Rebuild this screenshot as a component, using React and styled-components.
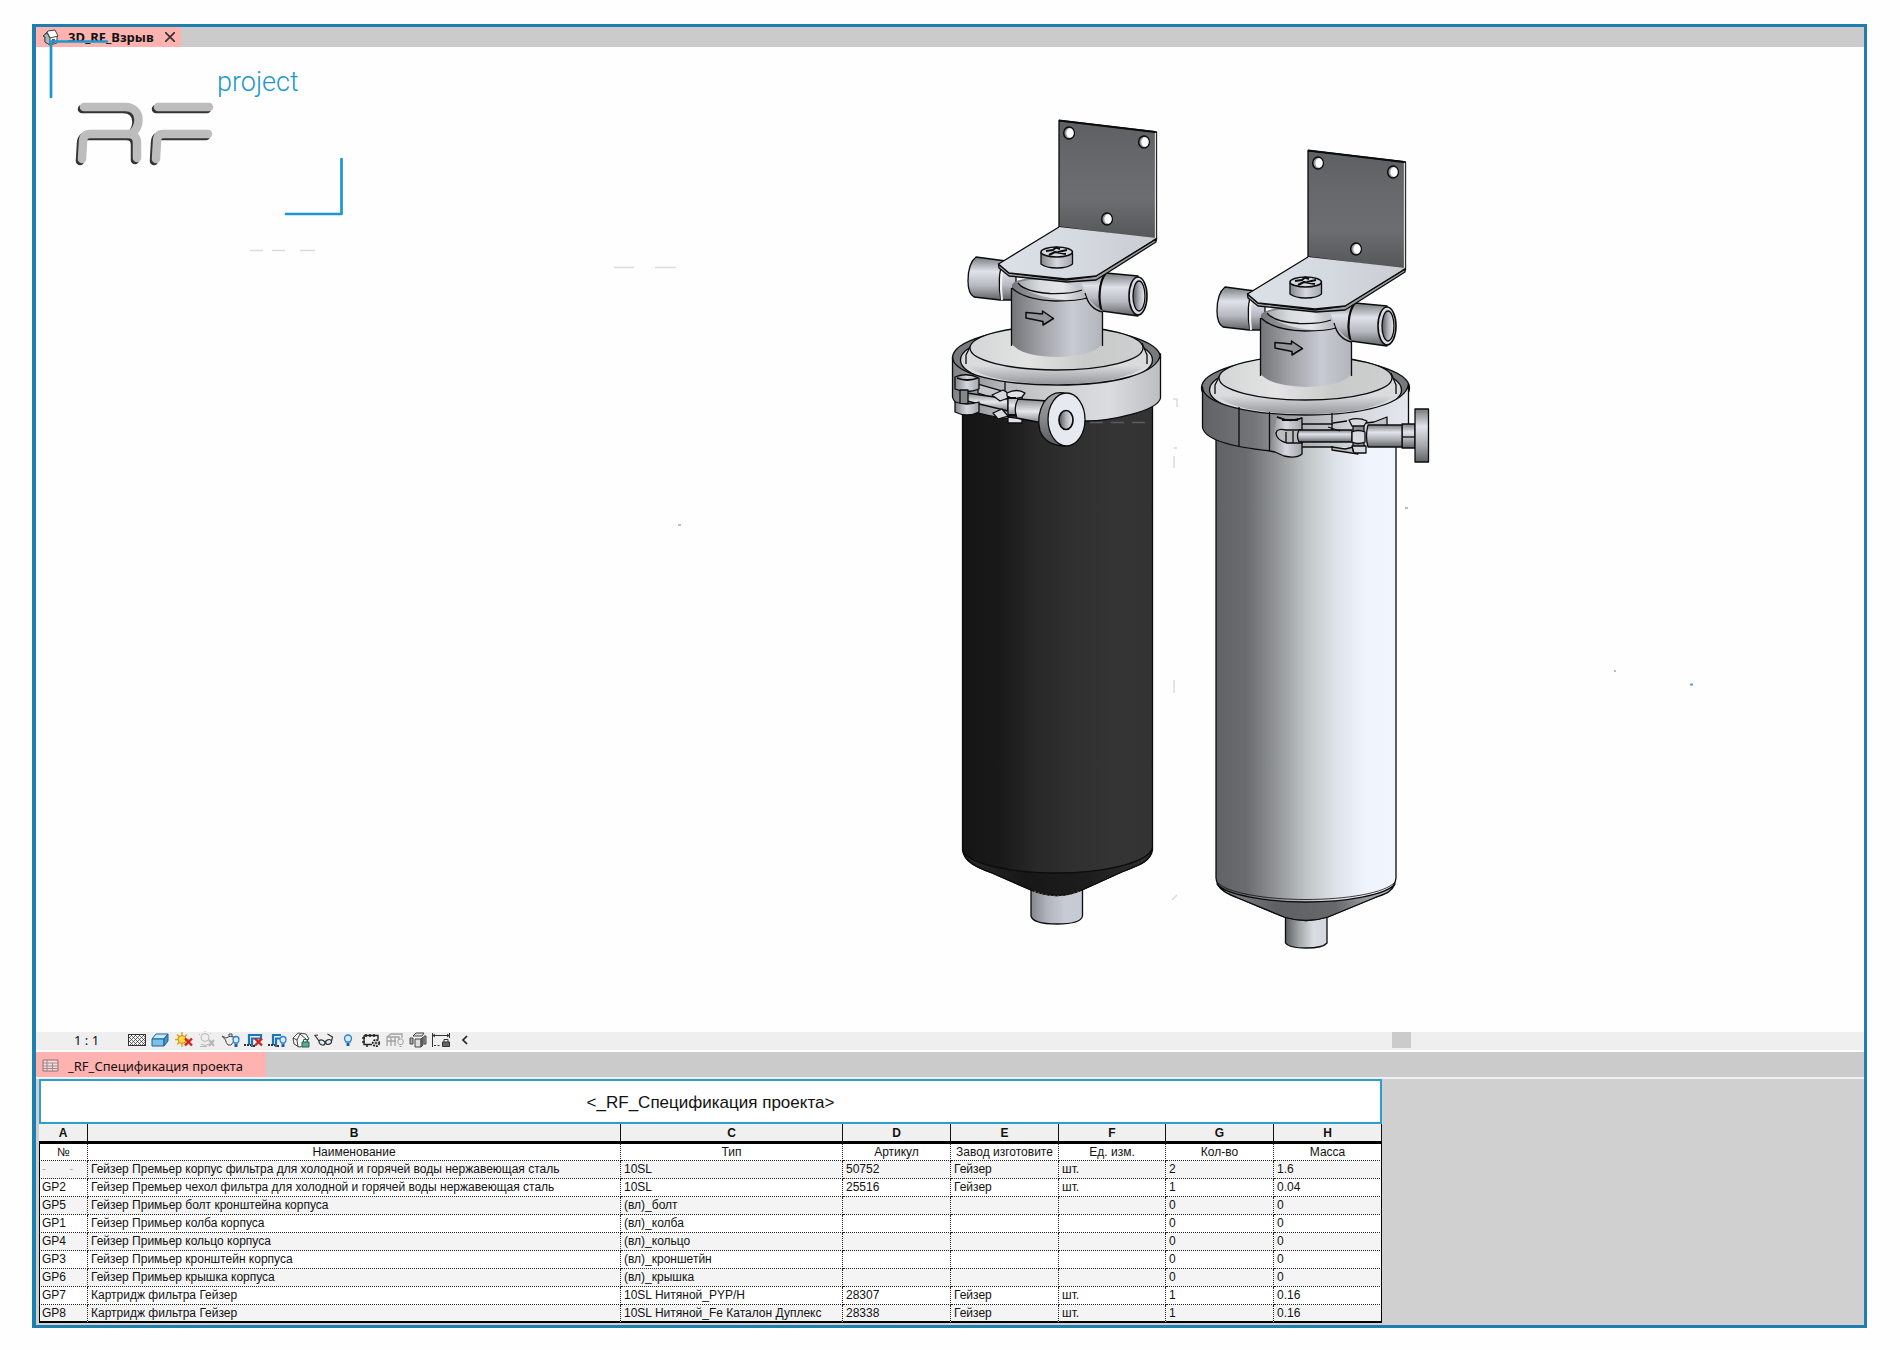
import React from "react";
import styled, { createGlobalStyle } from "styled-components";

const GlobalStyle = createGlobalStyle`
  * {
    box-sizing: border-box;
  }
  body {
    margin: 0;
    background: #fefefe;
    color: #111;
    font-family: "Noto Sans", "Open Sans", sans-serif;
  }
  button {
    padding: 0;
    border: 0;
    background: none;
    color: inherit;
    font: inherit;
  }
`;

const Page = styled.div`
  padding: 24px 33px 22px 32px;
`;

const Frame = styled.main`
  position: relative;
  border: 3px solid #1d7fad;
  border-left-width: 4px;
  background: #fefefe;
`;

const TabBar = styled.nav`
  display: flex;
  height: ${props => props.$height}px;
  background: #cbcbcb;
`;

const Tab = styled.div`
  display: flex;
  align-items: center;
  gap: 9px;
  padding: ${props => (props.$bold ? "0 4px 0 6px" : "2px 23px 0 6px")};
  background: #ffb3b0;
  font-size: 13px;
  font-weight: ${props => (props.$bold ? 700 : 400)};
  line-height: 18px;
`;

const TabIcon = styled.svg`
  width: 17px;
  height: 17px;
`;

const CloseButton = styled.button`
  display: flex;
  width: 14px;
  height: 14px;
  align-items: center;
  justify-content: center;
`;

const LogoMark = styled.svg`
  position: absolute;
  top: 12px;
  left: 12px;
  width: 300px;
  height: 182px;
  pointer-events: none;

  text {
    fill: #1c97cf;
    font-family: Roboto, sans-serif;
    font-size: 27px;
    font-weight: 300;
  }
`;

const Drawing = styled.svg`
  display: block;
  width: 100%;
  height: auto;
`;

const ViewBar = styled.div`
  display: flex;
  align-items: center;
  height: 18px;
  margin-bottom: 2px;
  padding: 0 0 2px 38px;
  background: #efefef;
`;

const ScaleButton = styled.button`
  width: 53px;
  font-size: 13px;
  line-height: 16px;
  text-align: left;
  white-space: pre;
`;

const ViewTools = styled.div`
  display: flex;
  justify-content: space-between;
  width: 348px;
`;

const ToolButton = styled.button`
  width: 20px;
  height: 16px;

  svg {
    display: block;
    width: 20px;
    height: 16px;
    overflow: visible;
  }
`;

const ScrollTrack = styled.div`
  flex: 1;
`;

const ScrollThumb = styled.div`
  width: 19px;
  height: 16px;
  margin-left: 66%;
  background: #cbcbcb;
`;

const SchedulePane = styled.section`
  padding: 0 0 2px 3px;
  border-top: 2px solid #f0f0f0;
  background: #d0d0d0;
`;

const Sheet = styled.div`
  width: 1343px;
  max-width: 100%;
`;

const SheetTitle = styled.h1`
  height: 45px;
  margin: 0;
  border: 2px solid #2a9fd0;
  background: #fff;
  font-family: "Liberation Sans", Arial, sans-serif;
  font-size: 17px;
  font-weight: 400;
  line-height: 43px;
  text-align: center;
`;

const Table = styled.table`
  width: 100%;
  table-layout: fixed;
  border-collapse: separate;
  border-spacing: 0;
  background: #fff;
  font-family: "Liberation Sans", Arial, sans-serif;
  font-size: 12px;
  line-height: 14px;
`;

const LetterCell = styled.th`
  height: 20px;
  padding: 0;
  border-right: 1px solid #111;
  border-bottom: 3px solid #000;
  background: #f0f0f0;
`;

const TitleCell = styled.th`
  height: 17px;
  padding: 0;
  overflow: hidden;
  border-right: 1px dotted #222;
  border-bottom: 1px dotted #222;
  font-weight: 400;
  white-space: nowrap;

  &:first-child {
    border-left: 1px solid #000;
  }
  &:last-child {
    border-right: 1px solid #000;
  }
`;

const Cell = styled.td`
  height: 18px;
  padding: 0 2px 2px 3px;
  overflow: hidden;
  border-right: 1px dotted #222;
  border-bottom: 1px dotted #222;
  white-space: pre;

  &:first-child {
    padding-left: 2px;
    border-left: 1px solid #000;
  }
  &:last-child {
    border-right: 1px solid #000;
  }
  tr:nth-child(odd) > & {
    background: #f4f4f4;
  }
  tr:last-child > & {
    padding-bottom: 1px;
    border-bottom: 2px solid #000;
  }
`;

const Faded = styled.span`
  color: #b5b5b5;
`;

const columns = [
  { letter: "A", title: "№", width: 49 },
  { letter: "B", title: "Наименование", width: 533 },
  { letter: "C", title: "Тип", width: 222 },
  { letter: "D", title: "Артикул", width: 108 },
  { letter: "E", title: "Завод изготовите", width: 108 },
  { letter: "F", title: "Ед. изм.", width: 107 },
  { letter: "G", title: "Кол-во", width: 108 },
  { letter: "H", title: "Масса", width: 108 }
];

const rows = [
  ["", "Гейзер Премьер корпус фильтра для холодной и горячей воды нержавеющая сталь", "10SL", "50752", "Гейзер", "шт.", "2", "1.6"],
  ["GP2", "Гейзер Премьер чехол фильтра для холодной и горячей воды нержавеющая сталь", "10SL", "25516", "Гейзер", "шт.", "1", "0.04"],
  ["GP5", "Гейзер Примьер болт кронштейна корпуса", "(вл)_болт", "", "", "", "0", "0"],
  ["GP1", "Гейзер Примьер колба корпуса", "(вл)_колба", "", "", "", "0", "0"],
  ["GP4", "Гейзер Примьер кольцо корпуса", "(вл)_кольцо", "", "", "", "0", "0"],
  ["GP3", "Гейзер Примьер кронштейн корпуса", "(вл)_кроншетйн", "", "", "", "0", "0"],
  ["GP6", "Гейзер Примьер крышка корпуса", "(вл)_крышка", "", "", "", "0", "0"],
  ["GP7", "Картридж фильтра Гейзер", "10SL Нитяной_PYP/H", "28307", "Гейзер", "шт.", "1", "0.16"],
  ["GP8", "Картридж фильтра Гейзер", "10SL Нитяной_Fe Каталон Дуплекс", "28338", "Гейзер", "шт.", "1", "0.16"]
];

const Cross = () => (
  <path d="M11 7.500l7 7M18 7.500l-7 7" stroke="#d3221c" strokeWidth="2.400" fill="none" />
);

const Bulb = () => (
  <g>
    <path d="M13.500 12Q12 10.500 12 8.500a3 3 0 0 1 6 0Q18 10.500 16.500 12z" fill="#d8ecff" stroke="#2a7fd0" strokeWidth="1.300" />
    <path d="M13.500 13h3v3h-3z" fill="#1d5f9f" />
  </g>
);

const tools = [
  {
    label: "Уровень детализации",
    icon: (
      <g stroke="#333" fill="none">
        <rect x="1.500" y="3.500" width="17" height="11" fill="#f4f4f4" />
        <path d="M2 7l3-3M2 11l7-7M2 15L13 4M6 15L17 4M10 15l8-8M14 15l4-4M16 4l2 2M12 4l6 6M8 4l10 10M4 4l10 10M2 6l8 8M2 10l4 4" strokeWidth=".7" />
      </g>
    )
  },
  {
    label: "Визуальный стиль",
    icon: (
      <g stroke="#17649b">
        <path d="M2 8l4-5h12l-4 5z" fill="#c9e8fa" />
        <path d="M2 8h12v7H2z" fill="#7dc0ea" />
        <path d="M14 8l4-5v7l-4 5z" fill="#4393c8" />
      </g>
    )
  },
  {
    label: "Солнце",
    icon: (
      <g>
        <path d="M8 1v15M1 8.500h14M3 3.500l10 10M13 3.500l-10 10" stroke="#e0a11a" strokeWidth="1.400" />
        <circle cx="8" cy="8.500" r="4" fill="#ffd84a" stroke="#c98a10" />
        <Cross />
      </g>
    )
  },
  {
    label: "Тени",
    icon: (
      <g stroke="#b5b5b5" fill="none">
        <circle cx="8" cy="6.500" r="4" />
        <path d="M4 13q4 3 8 0M3 15.500h7M8 0v1M2 3l1 1M13 3l1-1" />
        <path d="M12 9l5 6M17 9l-5 6" strokeWidth="2" />
      </g>
    )
  },
  {
    label: "Визуализация",
    icon: (
      <g>
        <path d="M1 5l4 2q4-3 8-1 1 5-3 8H7Q5 12 4.500 9zM8 5V3h3v2" fill="#eee" stroke="#444" />
        <Bulb />
      </g>
    )
  },
  {
    label: "Подрезка вида",
    icon: (
      <g fill="none">
        <path d="M5 14V4h12v5M8 16V7.500h9" stroke="#1c75b5" strokeWidth="2.200" />
        <path d="M0 14h7M9 15h3" stroke="#333" strokeDasharray="2 1" strokeWidth="2" />
        <Cross />
      </g>
    )
  },
  {
    label: "Граница подрезки",
    icon: (
      <g fill="none">
        <path d="M5 14V4h8M8 16V7.500h4" stroke="#1c75b5" strokeWidth="2.200" />
        <path d="M0 14h7M9 15h3" stroke="#333" strokeDasharray="2 1" strokeWidth="2" />
        <Bulb />
      </g>
    )
  },
  {
    label: "Заблокировать вид",
    icon: (
      <g stroke="#444">
        <path d="M2 7l5-5 8 1 3 5-2 1v6l-8 1-5-3z" fill="#f7f7f7" />
        <path d="M2 7l4 2 3-6M6 9l1 7M9 3l7 6" fill="none" />
        <path d="M12.500 11V8.500h4V11" fill="none" stroke="#246353" />
        <path d="M11 11h7v5h-7z" fill="#62a893" stroke="#246353" />
      </g>
    )
  },
  {
    label: "Временно скрыть",
    icon: (
      <g stroke="#333" strokeWidth="1.200" fill="#dceefa">
        <ellipse cx="8" cy="11.500" rx="3.200" ry="2.300" transform="rotate(30 8 11.500)" />
        <ellipse cx="14.500" cy="11" rx="3" ry="2.300" transform="rotate(-20 14.500 11)" />
        <path d="M5 10L1 4.500l3-.5M11 12.500q.5-1.500 1-.5M17.500 10l1-4-5-3" fill="none" />
      </g>
    )
  },
  {
    label: "Показать скрытые",
    icon: (
      <g>
        <path d="M8 11Q6.500 9 6.500 7.500a3.500 3.500 0 0 1 7 0Q13.500 9 12 11z" fill="#d8ecff" stroke="#2a7fd0" strokeWidth="1.300" />
        <path d="M8.500 12h3v3h-3z" fill="#1d5f9f" />
      </g>
    )
  },
  {
    label: "Свойства вида",
    icon: (
      <g fill="none" stroke="#222">
        <path d="M3 4.500h14v4M3 4.500v9h8" strokeWidth="1.400" />
        <path d="M1 7h3M1 11h3M5 3v3M9 3v3M13 3v3M6 13v3" strokeWidth="1.500" />
        <circle cx="15" cy="12" r="3.200" strokeDasharray="2 1" strokeWidth="1.800" />
        <circle cx="15" cy="12" r="1" />
      </g>
    )
  },
  {
    label: "Аналитическая модель",
    icon: (
      <g fill="none" stroke="#a2a2a2">
        <path d="M2 15V6l4-3h11v4M2 6h12v3M6 15V6M10 15V6M2 10h9" strokeWidth="1.300" />
        <path d="M13 12q-1-4 2.500-4t2.500 4l-1 1.500h-3zM14.500 15.500h2" />
      </g>
    )
  },
  {
    label: "Наборы смещения",
    icon: (
      <g stroke="#444" fill="#ddd">
        <path d="M5 5l3-3h8l-2 3z" />
        <path d="M2 7h3v6H2zM16 5h2v8h-2z" fill="#aaa" />
        <path d="M7 8h6v8H7z" />
        <path d="M13 8l2-2v8l-2 2z" fill="#777" />
      </g>
    )
  },
  {
    label: "Зависимости",
    icon: (
      <g fill="none" stroke="#333">
        <path d="M1.500 2v14M18.500 2v5M2 4.500h16M4 3L2 4.500 4 6M16 3l2 1.500L16 6" />
        <path d="M3 14.500h7" strokeDasharray="2 1.500" />
        <path d="M13 11V8.500h4V11" />
        <path d="M11.500 11h7v4.500h-7z" fill="#666" />
      </g>
    )
  },
  {
    label: "Свернуть",
    icon: <path d="M12 5L8 9l4 4" fill="none" stroke="#222" strokeWidth="1.700" />
  }
];

// both housings share the bracket, inlet/outlet and lid
const Head = () => (
  <g stroke="#0c0c0c" strokeWidth="1.300" strokeLinejoin="round">
    {/* pipes */}
    <path d="M976 257L1006 261L1016 264V300L1000 300L974 297C969 294 968 288 968 281C968 269 971 261 976 257Z" fill="url(#pipe)" />
    <path d="M1003 262C999 270 998 286 1001 300" fill="none" />
    <path d="M1005 262C1001 270 1000 286 1002 300" fill="none" stroke="#f4f4f4" strokeWidth="2" />
    <path d="M1074 281L1106 273V310Q1091 312 1086 295Z" fill="url(#pipe)" stroke="none" />
    <path d="M1106 273L1138 276V316L1102 311C1097 299 1099 282 1106 273Z" fill="url(#pipe)" />
    <ellipse cx="1138" cy="296" rx="9" ry="19" fill="#d7dbe3" strokeWidth="1.600" />
    <ellipse cx="1139" cy="296" rx="6" ry="15" fill="url(#bore)" />
    <path d="M1106 273C1099 281 1098 300 1102 312" fill="none" strokeWidth="2" />
    {/* clamp ring, far side */}
    <ellipse cx="1056.500" cy="358" rx="104" ry="31" fill="#77797c" />
    <ellipse cx="1056.500" cy="360" rx="96" ry="28" fill="#d9dadc" />
    {/* lid */}
    <path d="M970 347L966 361C970 376 1010 384 1057 384S1142 376 1147 361L1143 347Z" fill="url(#lidSide)" stroke="none" />
    <path d="M966 364V355L971 345M1147 364V355L1142 343" fill="none" />
    <ellipse cx="1056.500" cy="348" rx="86.500" ry="22" fill="url(#lidTop)" />
    {/* neck */}
    <path d="M1012 285Q1014 280 1030 278H1080Q1086 302 1103 311V343Q1095 356 1057 357Q1020 356 1011 343Z" fill="url(#neck)" stroke="none" />
    <path d="M1011.500 346V288M1102.500 346V312Q1089 309 1085 293" fill="none" />
    <path d="M1017 283Q1030 277 1060 281Q1081 287 1086 297L1066 300Q1030 297 1017 283Z" fill="url(#dome)" stroke="none" />
    <path d="M1018 283Q1025 292 1050 293.500Q1072 294 1082 290M1012 288Q1024 300 1056 301Q1078 301 1087 298" fill="none" />
    <path d="M1026 312.500L1042.500 314V311L1053.500 318.500L1043 325V321.500L1026 318Z" fill="#92959a" strokeWidth="1.500" />
    {/* bracket */}
    <path d="M1059 120.500L1156.500 132V240L1059 227Z" fill="url(#plate)" />
    <path d="M1059 120.500L1155 132" fill="none" strokeWidth="2" />
    <path d="M1155.500 133V238" stroke="#ddd" />
    <path d="M998.500 264L1009 273L1066 280L1096 276L1156 239V242L1096 280L1067 282L1009 276L999 268Z" fill="#9a9da2" />
    <path d="M1059 227L998.500 264L1009 273L1066 279L1096 276L1156 238Z" fill="url(#shelf)" stroke="none" />
    <path d="M1059 227L998.500 264L1009 273L1066 279L1096 276L1156 239" fill="none" />
    {[[1069, 133], [1144, 142], [1107, 219]].map(([x, y]) => (
      <g key={x}>
        <ellipse cx={x} cy={y} rx="5.300" ry="6" fill="#999" strokeWidth="1.500" />
        <ellipse cx={x + 1} cy={y} rx="3.700" ry="4.700" fill="#fff" stroke="none" />
      </g>
    ))}
    <path d="M1041 253V264Q1046 268 1057 268T1072.500 264V253Z" fill="url(#bolt)" />
    <ellipse cx="1056.700" cy="252" rx="15.700" ry="5" fill="#d3d7de" strokeWidth="1.600" />
    <path d="M1046 251L1053 250L1056 247.500L1060 249M1049 255L1055 252L1066 254M1058 252L1067 250" fill="none" strokeWidth="2" />
  </g>
);

const DarkFilter = () => (
  <g stroke="#0c0c0c" strokeWidth="1.300" strokeLinejoin="round">
    <path d="M1031 885V916Q1033 924 1057 924T1082.500 916V885Z" fill="url(#spout)" />
    <path d="M962.500 400V850C964 862 976 867 992 873L1031 890Q1057 901 1082 890L1124 871C1140 865 1151 861 1152.500 850V400Z" fill="url(#dark)" />
    <path d="M963 851C970 865 1014 873 1057 873S1146 864 1152 849C1150 862 1140 865 1124 871L1082 890Q1057 901 1031 890L992 873C976 867 966 862 963 851Z" fill="url(#darkCone)" />
    <path d="M1034 891Q1057 901 1080 891" fill="none" stroke="#999" strokeWidth=".7" strokeDasharray="2 2" />
    <Head />
    <path d="M952.500 357C953 374 1000 385 1057 385S1158 374 1160.500 354V398C1158 411 1110 421 1086 421L1040 421C990 419 955 410 952.500 397Z" fill="url(#ring)" />
    <path d="M1005 381V392" />
    {/* clamp bolt */}
    <path d="M978 384L1006 392V402L978 393Z" fill="#c2c5c9" />
    <path d="M967 393L1008 399V411L967 401Z" fill="url(#rod)" />
    <path d="M955 377Q967 372 979 378V389Q967 394 955 389Z" fill="url(#bolt)" />
    <path d="M960 390H968V404H960Z" fill="#84878b" />
    <path d="M955 402Q967 406 979 402V412Q967 418 955 412Z" fill="url(#bolt)" />
    <path d="M957 378Q967 382 978 378" fill="none" strokeWidth="1.800" />
    <path d="M992 395L1003 390L1008 393V398L1000 401ZM993 413L1002 409L1008 416L998 419Z" fill="#d6d9de" />
    <path d="M1008 394H1022V417H1008Z" fill="url(#rod)" />
    <path d="M1007 393Q1017 388 1025 393L1022 397Q1014 400 1007 396ZM1008 417L1022 419V423H1008Z" fill="#dfe2e6" />
    <path d="M1007 398H1016M1008 415H1018" strokeWidth="2.200" />
    <path d="M1018 399L1048 401V424L1017 418Q1013 408 1018 399Z" fill="url(#rod)" />
    <path d="M1064 393Q1052 391 1044 402Q1036 416 1040 431Q1046 446 1066 446Z" fill="url(#wheelSide)" />
    <ellipse cx="1066.500" cy="419.500" rx="18.500" ry="26.500" fill="#e6e9f0" />
    <ellipse cx="1066" cy="420" rx="7" ry="9.500" fill="url(#bore)" strokeWidth="1.700" />
    <path d="M1090 422.500H1150" stroke="#5b5b5b" strokeDasharray="13 8" />
  </g>
);

const SteelFilter = () => (
  <g stroke="#0c0c0c" strokeWidth="1.300" strokeLinejoin="round">
    <path d="M1285.500 914V943Q1289 948 1306 948T1327 943V914Z" fill="url(#spoutSteel)" />
    <path d="M1216 420V878C1217 890 1228 893 1238 898L1284 917Q1306 924 1328 917L1374 898C1386 893 1395 889 1396 878V420Z" fill="url(#steel)" />
    <path d="M1217 884C1226 895 1266 902 1306 902S1386 895 1395 884C1391 893 1384 894 1374 898L1328 917Q1306 924 1284 917L1238 898C1228 894 1221 891 1217 884Z" fill="url(#steelCone)" />
    <path d="M1217 882C1226 893 1266 899.500 1306 899.500S1386 893 1395 882" fill="none" strokeWidth=".8" />
    <g transform="translate(249 30)">
      <Head />
    </g>
    <path d="M1202.500 387C1203 404 1250 415 1306 415S1406 404 1408.500 384V447H1302L1271 451C1232 447 1204 440 1202.500 427Z" fill="url(#ringSteel)" stroke="none" />
    <path d="M1271 451C1232 447 1204 440 1202.500 427V387C1203 404 1250 415 1306 415S1406 404 1408.500 384V425" fill="none" />
    <path d="M1239 407V446M1269.500 412V451M1332 413V438M1302 424H1333M1302 447H1333" fill="none" />
    <path d="M1277 417Q1289 422 1302 418V454Q1296 459 1284 456L1275 452L1270 451" fill="url(#bolt)" />
    <path d="M1277 417Q1289 423 1302 418M1282 420H1298" fill="none" strokeWidth="1.800" />
    <path d="M1302 430H1286Q1277 428 1276 433Q1276 440 1287 443H1302Z" fill="#b9bcc0" />
    <path d="M1286 432V443M1293 431V443" />
    <path d="M1299 430H1352V442H1299Q1296 436 1299 430Z" fill="url(#bar)" />
    <path d="M1332 447L1345 449L1358 446V454L1332 450ZM1328 427L1340 431M1347 421L1333 423M1366 423L1374 422L1387 417V426H1374" fill="#bec1c5" />
    <path d="M1353 425H1364V451H1353Z" fill="#898c90" />
    <path d="M1349 420Q1358 417 1367 421L1364 426H1352ZM1352 432Q1358 429 1365 432V442Q1358 445 1352 442ZM1352 446H1366V453H1354Z" fill="#d7dade" />
    <path d="M1402 424H1415V448H1402Z" fill="url(#bar)" />
    <path d="M1402 437H1415" />
    <path d="M1368 425H1402V447H1368Q1365 436 1368 425Z" fill="url(#bar)" />
    <path d="M1415 409H1428.500V462H1415Z" fill="url(#bar)" />
  </g>
);

const gradients = [
  { id: "pipe", vertical: true, stops: ["#777a7e", "#dfe2e8", "#b6b9bf", "#606266"] },
  { id: "bore", stops: ["#55585c", "#aeb1b7", "#e8eaf0"] },
  { id: "plate", vertical: true, stops: ["#5d5f61", "#66686b", "#6b6d70", "#535557"] },
  { id: "shelf", stops: ["#dce0e7", "#d5d9e0", "#c9ccd2"] },
  { id: "bolt", stops: ["#85878b", "#d5d8de", "#a3a6ab"] },
  { id: "neck", stops: ["#727478", "#a1a3a8", "#c8cbd3", "#b2b4ba"] },
  { id: "dome", stops: ["#a4a7ab", "#d9dcdf", "#e4e6e8", "#b2b4ba"] },
  { id: "lidTop", stops: ["#d4d5d6", "#e2e3e2", "#c9cbca", "#cdcfd0"] },
  { id: "lidSide", vertical: true, stops: ["#dadcdf", "#d9dbdd", "#96989b"] },
  { id: "ring", stops: ["#808286", "#b6b8bb", "#d0d1d2", "#dadce0", "#bcbec1"] },
  { id: "ringSteel", stops: ["#606265", "#737579", "#b0b2b4", "#d4d8dc", "#e4e7ee"] },
  { id: "rod", vertical: true, stops: ["#8a8c90", "#e6e8ec", "#777a7e"] },
  { id: "bar", vertical: true, stops: ["#777a7e", "#e1e4ea", "#aaadb2", "#616367"] },
  { id: "wheelSide", vertical: true, stops: ["#a2a4a8", "#85878b", "#56585b"] },
  { id: "dark", stops: ["#151515", "#191919", "#292929", "#303030", "#343434", "#333"] },
  { id: "darkCone", stops: ["#282828", "#171717", "#1d1d1d", "#313131"] },
  { id: "steel", stops: ["#606265", "#696b6e", "#929597", "#bfc4c6", "#dee3eb", "#f0f4fc", "#f1f5fd"] },
  { id: "steelCone", stops: ["#85878a", "#5e6063", "#66686b", "#c5c8cc"] },
  { id: "spout", stops: ["#85878d", "#b3b6be", "#c7cbd5", "#c6cad3"] },
  { id: "spoutSteel", stops: ["#5c5f62", "#a3a7aa", "#d8dde2", "#d3d7df"] }
];

const Model = () => (
  <Drawing viewBox="36 47 1828 985" role="img" aria-label="3D_RF_Взрыв">
    <defs>
      {gradients.map(g => (
        <linearGradient key={g.id} id={g.id} x2={g.vertical ? 0 : 1} y2={g.vertical ? 1 : 0}>
          {g.stops.map((color, i) => (
            <stop key={i} offset={i / (g.stops.length - 1)} stopColor={color} />
          ))}
        </linearGradient>
      ))}
    </defs>
    <g fill="none" stroke="#dcdcdc" strokeWidth="1.500">
      <path d="M250 250.500H263M272 250.500H285M300 250.500H315M614 267.500H634M655 267.500H676" />
      <path d="M1173 399H1177V407M1174 448H1177M1174 456V468M1174 680V693M1172 900L1177 895" />
    </g>
    <path d="M678 525h3M1405 508h3M1614 671h2" stroke="#bbb" strokeWidth="2" />
    <path d="M1690 684.500h3" stroke="#5d9fd6" strokeWidth="2" />
    <DarkFilter />
    <SteelFilter />
  </Drawing>
);

const strokes = [
  "M84 107H125C135 107 138.500 114 138.500 120C138.500 127 135 131 132 134",
  "M82 159L83 142Q83 134 90 134H128Q137 134 137 143V158",
  "M158 107H209",
  "M156 159L157 142Q157 134 163 134H208"
];

const Logo = () => (
  <LogoMark viewBox="48 39 300 182" aria-hidden="true">
    <path d="M51 97V41.500H107M341.500 159V214H286" fill="none" stroke="#1c97cf" strokeWidth="2.700" strokeLinecap="round" strokeLinejoin="round" />
    <g fill="none" strokeWidth="8.500" strokeLinecap="round">
      <g stroke="#333" transform="translate(-2 2)">
        {strokes.map(d => (
          <path key={d} d={d} />
        ))}
      </g>
      <g stroke="#bdbdbd">
        {strokes.map(d => (
          <path key={d} d={d} />
        ))}
      </g>
    </g>
    <text x="217" y="91">project</text>
  </LogoMark>
);

class Schedule extends React.Component {
  renderCell(value, index) {
    if (!value && index === 0) {
      return <Faded>{"-       -"}</Faded>;
    }
    return value;
  }

  render() {
    return (
      <SchedulePane>
        <Sheet>
          <SheetTitle>&lt;_RF_Спецификация проекта&gt;</SheetTitle>
          <Table>
            <colgroup>
              {columns.map(column => (
                <col key={column.letter} width={column.width} />
              ))}
            </colgroup>
            <thead>
              <tr>
                {columns.map(column => (
                  <LetterCell key={column.letter}>{column.letter}</LetterCell>
                ))}
              </tr>
              <tr>
                {columns.map(column => (
                  <TitleCell key={column.letter}>{column.title}</TitleCell>
                ))}
              </tr>
            </thead>
            <tbody>
              {rows.map((row, i) => (
                <tr key={i}>
                  {row.map((value, j) => (
                    <Cell key={j}>{this.renderCell(value, j)}</Cell>
                  ))}
                </tr>
              ))}
            </tbody>
          </Table>
        </Sheet>
      </SchedulePane>
    );
  }
}

export default function App() {
  return (
    <Page>
      <GlobalStyle />
      <Frame>
        <TabBar $height={20}>
          <Tab $bold>
            <TabIcon viewBox="0 0 17 17">
              <path d="M1 7L6 2l7-1 3 6-1 1v6l-7 2-5-3V8z" fill="#fff" stroke="#3d4650" />
              <path d="M1 7l2 1v5l5 3V9L5 4z" fill="#a9b4bd" stroke="#3d4650" />
              <path d="M5 3l3 6 8-2" fill="none" stroke="#3d4650" />
              <path d="M10 10h3v4l-3 1z" fill="#4c6170" />
            </TabIcon>
            <button>3D_RF_Взрыв</button>
            <CloseButton aria-label="Закрыть">
              <svg width="10" height="10" viewBox="0 0 10 10">
                <path d="M0 0l10 10M10 0L0 10" stroke="#333" strokeWidth="1.700" />
              </svg>
            </CloseButton>
          </Tab>
        </TabBar>
        <Logo />
        <Model />
        <ViewBar>
          <ScaleButton>1 : 1</ScaleButton>
          <ViewTools>
            {tools.map(tool => (
              <ToolButton key={tool.label} aria-label={tool.label}>
                <svg viewBox="0 1 20 16">{tool.icon}</svg>
              </ToolButton>
            ))}
          </ViewTools>
          <ScrollTrack>
            <ScrollThumb />
          </ScrollTrack>
        </ViewBar>
        <TabBar $height={25}>
          <Tab>
            <TabIcon viewBox="0 0 17 17">
              <path d="M1 3h15v11H1z" fill="#f5dedd" stroke="#8d6f70" />
              <path d="M1 6h15M1 9h15M1 11.500h15M5 3v11M10.500 6v8" stroke="#a78485" />
            </TabIcon>
            <button>_RF_Спецификация проекта</button>
          </Tab>
        </TabBar>
        <Schedule />
      </Frame>
    </Page>
  );
}
